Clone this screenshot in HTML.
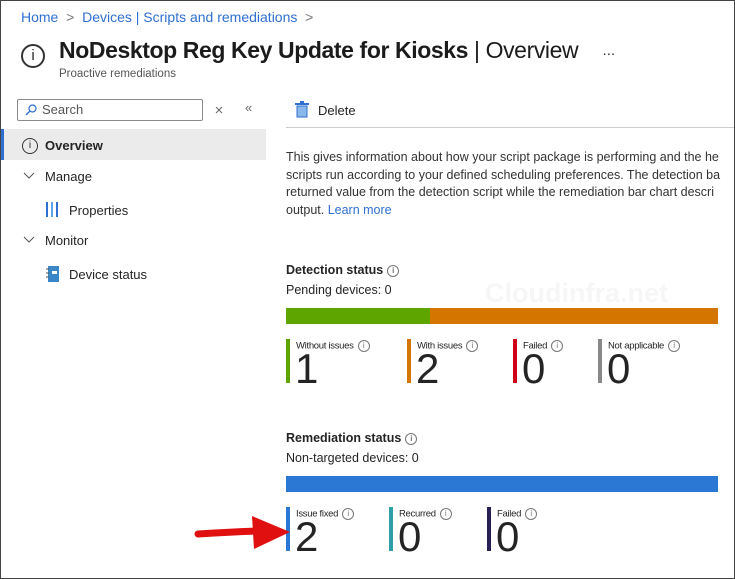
<html><head><style>
body{margin:0;width:735px;height:579px;overflow:hidden;font-family:"Liberation Sans",sans-serif;background:#fff;position:relative;color:#242424}
.a{position:absolute;white-space:nowrap}
.frame{position:absolute;left:0;top:0;width:733px;height:577px;border:1px solid #444}
.tile{position:absolute;border-left:4px solid;height:44px}
.tile .l{position:absolute;left:6px;top:1px;font-size:9.5px;letter-spacing:-.3px;white-space:nowrap}
.tile .n{position:absolute;left:5px;top:10px;font-size:42px;line-height:40px}
.i{display:inline-block;width:10px;height:10px;border:1px solid #777;border-radius:50%;font-size:8px;line-height:10px;text-align:center;color:#777;vertical-align:middle;margin-left:4px}
</style></head><body>
<div class="a" style="left:21px;top:9px;font-size:14px;color:#2f6fd0">Home <span style="color:#777">&nbsp;&gt;&nbsp;</span> Devices | Scripts and remediations <span style="color:#777">&nbsp;&gt;</span></div>
<div class="a" style="left:21px;top:44px;width:24px;height:24px;border:2px solid #333;border-radius:50%;box-sizing:border-box;text-align:center;font-size:15px;line-height:20px">i</div>
<div class="a" style="left:59px;top:37px;font-size:23px;color:#1b1b1b;letter-spacing:-.4px"><b style="font-weight:600">NoDesktop Reg Key Update for Kiosks</b> <span style="font-weight:300">| Overview</span> <span style="font-size:14px;margin-left:18px">···</span></div>
<div class="a" style="left:59px;top:68px;font-size:11.5px;color:#555">Proactive remediations</div>
<div class="a" style="left:17px;top:99px;width:186px;height:22px;border:1px solid #8a8a8a;box-sizing:border-box;border-radius:2px;font-size:13px;color:#555;line-height:20px;padding-left:24px">Search
<svg style="position:absolute;left:7px;top:4px" width="12" height="12"><circle cx="7.5" cy="4.5" r="3.5" fill="none" stroke="#2f6fd0" stroke-width="1.2"/><path d="M5 7L1 11" stroke="#2f6fd0" stroke-width="1.3"/></svg></div>
<svg class="a" style="left:215px;top:106px" width="8" height="8"><path d="M1 1L7 7M7 1L1 7" stroke="#666"/></svg>
<div class="a" style="left:245px;top:100px;font-size:13px;color:#666">«</div>
<div class="a" style="left:0;top:129px;width:266px;height:31px;background:#ebebeb"></div>
<div class="a" style="left:1px;top:129px;width:3px;height:31px;background:#2f6fd0"></div>
<div class="a" style="left:22px;top:138px;width:14px;height:14px;border:1.3px solid #333;border-radius:50%;font-size:10px;text-align:center;line-height:14px">i</div>
<div class="a" style="left:45px;top:138px;font-size:13px;font-weight:600">Overview</div>
<svg class="a" style="left:23px;top:172px" width="12" height="8"><path d="M1 1L6 6L11 1" stroke="#555" fill="none"/></svg>
<div class="a" style="left:45px;top:169px;font-size:13px">Manage</div>
<svg class="a" style="left:46px;top:202px" width="14" height="15"><rect x="0" y="0" width="2" height="15" fill="#2f6fd0"/><rect x="5" y="0" width="2" height="15" fill="#5aa6e8"/><rect x="10" y="0" width="2" height="15" fill="#2f6fd0"/></svg>
<div class="a" style="left:69px;top:203px;font-size:13px">Properties</div>
<svg class="a" style="left:23px;top:236px" width="12" height="8"><path d="M1 1L6 6L11 1" stroke="#555" fill="none"/></svg>
<div class="a" style="left:45px;top:233px;font-size:13px">Monitor</div>
<svg class="a" style="left:46px;top:266px" width="14" height="16"><rect x="2" y="0" width="11" height="16" fill="#3a86c8"/><rect x="6" y="5" width="5" height="3" fill="#fff"/><path d="M0 3h3M0 7h3M0 11h3" stroke="#555"/></svg>
<div class="a" style="left:69px;top:267px;font-size:13px">Device status</div>
<svg class="a" style="left:295px;top:101px" width="14" height="17"><rect x="0" y="2" width="14" height="2" fill="#2f6fd0"/><rect x="5" y="0" width="4" height="2" fill="#2f6fd0"/><rect x="2" y="5" width="10" height="11" fill="#8ab8ea" stroke="#2f6fd0"/></svg>
<div class="a" style="left:318px;top:103px;font-size:13px">Delete</div>
<div class="a" style="left:286px;top:127px;width:449px;height:1px;background:#ccc"></div>
<div class="a" style="left:286px;top:149px;font-size:12.5px;line-height:17.5px;color:#333">This gives information about how your script package is performing and the he<br>scripts run according to your defined scheduling preferences. The detection ba<br>returned value from the detection script while the remediation bar chart descri<br>output. <span style="color:#2f6fd0">Learn more</span></div>
<div class="a" style="left:485px;top:278px;font-size:27px;color:#f6f6f6;font-weight:bold">Cloudinfra.net</div>
<div class="a" style="left:286px;top:263px;font-size:12.5px;font-weight:600">Detection status<span class="i">i</span></div>
<div class="a" style="left:286px;top:283px;font-size:12.5px">Pending devices: 0</div>
<div class="a" style="left:286px;top:308px;width:144px;height:16px;background:#5ea500"></div>
<div class="a" style="left:430px;top:308px;width:288px;height:16px;background:#d47500"></div>
<div class="tile" style="left:286px;top:339px;border-color:#5ea500"><div class="l">Without issues<span class="i">i</span></div><div class="n">1</div></div>
<div class="tile" style="left:407px;top:339px;border-color:#d47500"><div class="l">With issues<span class="i">i</span></div><div class="n">2</div></div>
<div class="tile" style="left:513px;top:339px;border-color:#d00018"><div class="l">Failed<span class="i">i</span></div><div class="n">0</div></div>
<div class="tile" style="left:598px;top:339px;border-color:#888"><div class="l">Not applicable<span class="i">i</span></div><div class="n">0</div></div>
<div class="a" style="left:286px;top:431px;font-size:12.5px;font-weight:600">Remediation status<span class="i">i</span></div>
<div class="a" style="left:286px;top:451px;font-size:12.5px">Non-targeted devices: 0</div>
<div class="a" style="left:286px;top:476px;width:432px;height:16px;background:#2b78d4"></div>
<div class="tile" style="left:286px;top:507px;border-color:#2b78d4"><div class="l">Issue fixed<span class="i">i</span></div><div class="n">2</div></div>
<div class="tile" style="left:389px;top:507px;border-color:#2e9fa8"><div class="l">Recurred<span class="i">i</span></div><div class="n">0</div></div>
<div class="tile" style="left:487px;top:507px;border-color:#2a1f55"><div class="l">Failed<span class="i">i</span></div><div class="n">0</div></div>
<svg class="a" style="left:190px;top:512px" width="105" height="42"><path d="M8 22Q40 20 70 19" stroke="#e01010" stroke-width="7" stroke-linecap="round" fill="none"/><path d="M62 4L100 20L64 37Z" fill="#e01010"/></svg>
<div class="frame"></div>
</body></html>
